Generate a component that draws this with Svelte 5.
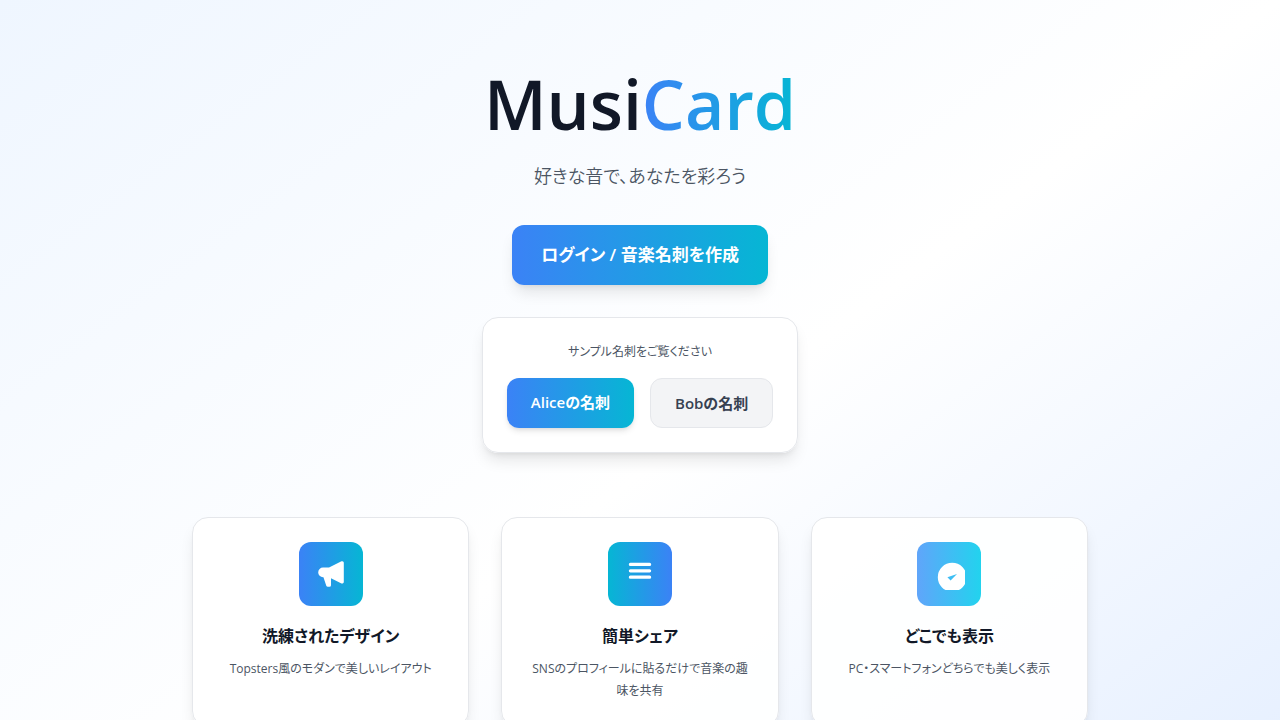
<script>
  const features = [
    {
      tone: 'blue',
      title: '洗練されたデザイン',
      text: 'Topsters風のモダンで美しいレイアウト',
      icon: 'M18 3a1 1 0 00-1.447-.894L8.763 6H5a3 3 0 000 6h.28l1.771 5.316A1 1 0 008 18h1a1 1 0 001-1v-4.382l6.553 3.276A1 1 0 0018 15V3z'
    },
    {
      tone: 'cyan',
      title: '簡単シェア',
      text: 'SNSのプロフィールに貼るだけで音楽の趣味を共有',
      icon: 'M3 4a1 1 0 011-1h12a1 1 0 110 2H4a1 1 0 01-1-1zM3 8a1 1 0 011-1h12a1 1 0 110 2H4a1 1 0 01-1-1zM3 12a1 1 0 011-1h12a1 1 0 110 2H4a1 1 0 01-1-1z'
    },
    {
      tone: 'light',
      title: 'どこでも表示',
      text: 'PC・スマートフォンどちらでも美しく表示',
      icon: 'M9 12l2 2 4-4m6 2a9 9 0 11-18 0 9 9 0 0118 0z'
    }
  ];
</script>

<main>
  <div class="content">
    <header>
      <h1>Musi<span>Card</span></h1>
      <p class="tagline">好きな音で、あなたを彩ろう</p>
      <a class="login" href="#login">ログイン / 音楽名刺を作成</a>
    </header>

    <section class="samples">
      <p>サンプル名刺をご覧ください</p>
      <div class="links">
        <a class="alice" href="#alice">Aliceの名刺</a>
        <a class="bob" href="#bob">Bobの名刺</a>
      </div>
    </section>

    <section class="features">
      {#each features as feature}
        <article>
          <div class="icon {feature.tone}">
            <svg viewBox="0 0 20 20" fill="currentColor" aria-hidden="true">
              <path fill-rule="evenodd" d={feature.icon} />
            </svg>
          </div>
          <h3>{feature.title}</h3>
          <p>{feature.text}</p>
        </article>
      {/each}
    </section>
  </div>
</main>

<style>
  :global(body) {
    margin: 0;
    font-family: 'Open Sans', 'Noto Sans CJK JP', sans-serif;
    font-feature-settings: 'palt';
    color: #111827;
  }

  :global(*) {
    box-sizing: border-box;
  }

  h1, h3, p {
    margin: 0;
  }

  a {
    text-decoration: none;
  }

  main {
    min-height: 100vh;
    padding: 64px 16px 224px;
    background: linear-gradient(to bottom right, #eff6ff, #ffffff, #e0ecff);
  }

  :global(html) {
    scrollbar-width: none;
  }

  .content {
    max-width: 896px;
    margin: 0 auto;
    display: flex;
    flex-direction: column;
    align-items: center;
    text-align: center;
  }

  header {
    display: flex;
    flex-direction: column;
    align-items: center;
  }

  h1 {
    font-size: 68px;
    line-height: 80px;
    font-weight: 600;
  }

  h1 span {
    background: linear-gradient(to right, #3b82f6, #06b6d4);
    background-clip: text;
    color: transparent;
  }

  .tagline {
    margin: 16px 0 33px;
    font-size: 18px;
    line-height: 32px;
    font-weight: 350;
    color: #4b5563;
  }

  .login {
    min-width: 256px;
    padding: 16px 24px;
    border-radius: 12px;
    font-size: 17px;
    line-height: 28px;
    font-weight: 600;
    color: #ffffff;
    background: linear-gradient(to right, #3b82f6, #06b6d4);
    box-shadow: 0 10px 15px -3px rgb(0 0 0 / 0.1), 0 4px 6px -4px rgb(0 0 0 / 0.1);
  }

  .samples {
    margin: 32px 0 64px;
    padding: 24px;
    border: 1px solid #e5e7eb;
    border-radius: 16px;
    background: rgb(255 255 255 / 0.9);
    box-shadow: 0 10px 15px -3px rgb(0 0 0 / 0.1), 0 4px 6px -4px rgb(0 0 0 / 0.1);
  }

  .samples p {
    margin-bottom: 16px;
    font-size: 12px;
    line-height: 20px;
    color: #4b5563;
  }

  .links {
    display: flex;
    justify-content: center;
    gap: 16px;
  }

  .links a {
    padding: 12px 24px;
    border-radius: 12px;
    font-size: 15px;
    line-height: 24px;
    font-weight: 600;
  }

  .links .alice {
    color: #ffffff;
    background: linear-gradient(to right, #3b82f6, #06b6d4);
    box-shadow: 0 4px 6px -1px rgb(0 0 0 / 0.1), 0 2px 4px -2px rgb(0 0 0 / 0.1);
  }

  .links .bob {
    border: 1px solid #e5e7eb;
    color: #374151;
    background: #f3f4f6;
  }

  .features {
    width: 100%;
    display: grid;
    grid-template-columns: repeat(3, minmax(0, 1fr));
    gap: 32px;
  }

  article {
    padding: 24px;
    border: 1px solid #e5e7eb;
    border-radius: 16px;
    background: rgb(255 255 255 / 0.9);
    box-shadow: 0 10px 15px -3px rgb(0 0 0 / 0.1), 0 4px 6px -4px rgb(0 0 0 / 0.1);
  }

  .icon {
    width: 64px;
    height: 64px;
    margin: 0 auto 16px;
    display: flex;
    align-items: center;
    justify-content: center;
    border-radius: 12px;
    color: #ffffff;
  }

  .icon svg {
    width: 32px;
    height: 32px;
  }

  .blue {
    background: linear-gradient(to right, #3b82f6, #06b6d4);
  }

  .cyan {
    background: linear-gradient(to right, #06b6d4, #3b82f6);
  }

  .light {
    background: linear-gradient(to right, #60a5fa, #22d3ee);
  }

  h3 {
    margin-bottom: 8px;
    font-size: 16px;
    line-height: 28px;
    font-weight: 600;
  }

  article p {
    font-size: 12px;
    line-height: 22px;
    color: #4b5563;
  }
</style>
